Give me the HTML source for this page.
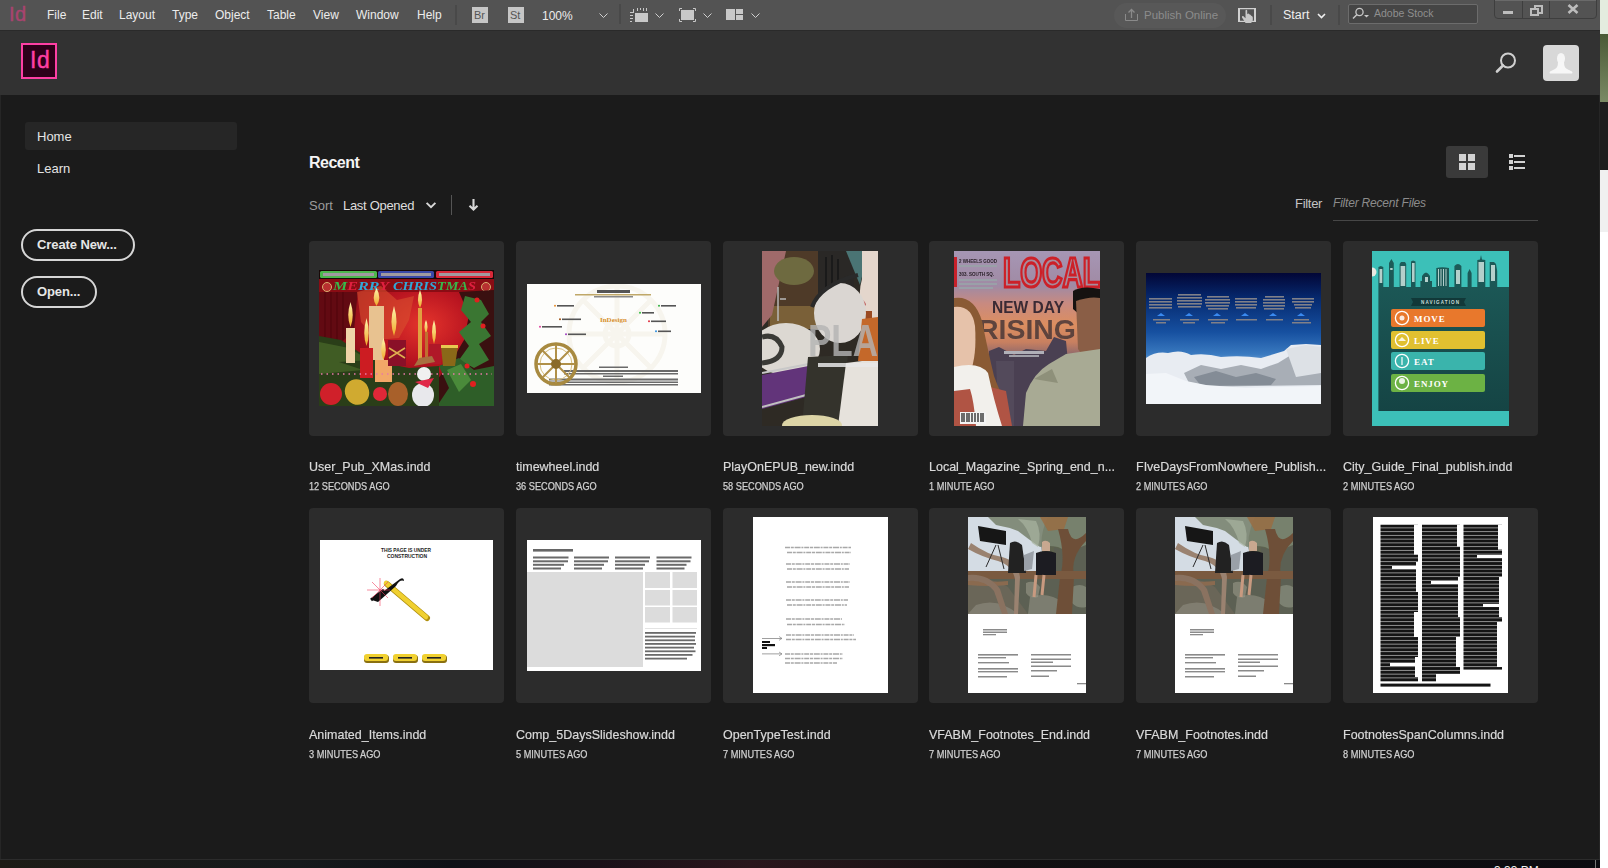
<!DOCTYPE html>
<html><head><meta charset="utf-8">
<style>
*{margin:0;padding:0;box-sizing:border-box}
html,body{width:1608px;height:868px;overflow:hidden;background:#fff;font-family:"Liberation Sans",sans-serif}
.a{position:absolute}
.t{position:absolute;white-space:nowrap;line-height:1}
#win{position:absolute;left:0;top:0;width:1600px;height:859px;background:#1b1b1b}
#menubar{position:absolute;left:0;top:0;width:1600px;height:30px;background:#535353}
.mi{position:absolute;top:9px;font-size:12px;color:#ececec;line-height:1;white-space:nowrap}
.sep{position:absolute;width:2px;background:#494949}
#header{position:absolute;left:0;top:30px;width:1600px;height:65px;background:#323232}
.card{position:absolute;width:195px;height:195px;background:#2c2c2c;border-radius:4px;overflow:hidden}
.th{position:absolute;overflow:hidden}
.ttl{position:absolute;font-size:13.5px;color:#dadada;-webkit-text-stroke:0.2px #dadada;white-space:nowrap;line-height:1;transform:scaleX(0.925);transform-origin:0 0}
.sub{position:absolute;font-size:10.5px;color:#d0d0d0;-webkit-text-stroke:0.25px #d0d0d0;white-space:nowrap;line-height:1;transform:scaleX(0.875);transform-origin:0 0}
.chev{position:absolute}
</style></head><body>
<!-- desktop strip -->
<div class="a" style="left:1600px;top:0;width:8px;height:34px;background:#e4ecdf"></div>
<div class="a" style="left:1600px;top:34px;width:8px;height:68px;background:linear-gradient(#4a5a36,#7a8a64)"></div>
<div class="a" style="left:1600px;top:102px;width:8px;height:68px;background:#1e1e1e"></div>
<div class="a" style="left:1600px;top:170px;width:8px;height:62px;background:#f0f0f0"></div>

<div id="win">
 <div class="a" style="left:0;top:30px;width:1px;height:830px;background:#262626"></div>
 <div class="a" style="left:1599px;top:30px;width:1px;height:830px;background:#262626"></div>
 <div id="menubar">
  <div class="t" style="left:9px;top:4px;font-size:20px;color:#a8446f;-webkit-text-stroke:0.4px #a8446f;letter-spacing:0.5px">Id</div>
  <div class="mi" style="left:47px">File</div>
  <div class="mi" style="left:82px">Edit</div>
  <div class="mi" style="left:119px">Layout</div>
  <div class="mi" style="left:172px">Type</div>
  <div class="mi" style="left:215px">Object</div>
  <div class="mi" style="left:267px">Table</div>
  <div class="mi" style="left:313px">View</div>
  <div class="mi" style="left:356px">Window</div>
  <div class="mi" style="left:417px">Help</div>
  <div class="sep" style="left:455px;top:5px;height:20px"></div>
  <div class="a" style="left:472px;top:7px;width:16px;height:16px;background:#c6c6c6"><div class="t" style="left:2px;top:3px;font-size:11px;color:#555">Br</div></div>
  <div class="a" style="left:508px;top:7px;width:16px;height:16px;background:#c6c6c6"><div class="t" style="left:2px;top:3px;font-size:11px;color:#555">St</div></div>
  <div class="mi" style="left:542px;top:10px">100%</div>
  <svg class="a" style="left:599px;top:13px" width="9" height="6"><path d="M0.5 0.5 L4.5 4.5 L8.5 0.5" stroke="#cfcfcf" fill="none" stroke-width="1"/></svg>
  <div class="sep" style="left:619px;top:4px;height:20px"></div>
  <!-- icon1 -->
  <div class="a" style="left:635px;top:13px;width:13px;height:9px;background:#c8c8c8"></div>
  <div class="a" style="left:630px;top:12px;width:4px;height:1px;background:#c8c8c8"></div>
  <div class="a" style="left:633px;top:9px;width:1px;height:3px;background:#c8c8c8"></div>
  <div class="a" style="left:637px;top:8px;width:1px;height:3px;background:#c8c8c8"></div>
  <div class="a" style="left:640px;top:8px;width:1px;height:2px;background:#c8c8c8"></div>
  <div class="a" style="left:643px;top:8px;width:1px;height:3px;background:#c8c8c8"></div>
  <div class="a" style="left:646px;top:8px;width:1px;height:3px;background:#c8c8c8"></div>
  <div class="a" style="left:630px;top:15px;width:3px;height:1px;background:#c8c8c8"></div>
  <div class="a" style="left:630px;top:18px;width:3px;height:1px;background:#c8c8c8"></div>
  <div class="a" style="left:630px;top:21px;width:2px;height:1px;background:#c8c8c8"></div>
  <svg class="a" style="left:655px;top:13px" width="9" height="6"><path d="M0.5 0.5 L4.5 4.5 L8.5 0.5" stroke="#cfcfcf" fill="none" stroke-width="1"/></svg>
  <!-- icon2 -->
  <svg class="a" style="left:679px;top:8px" width="17" height="14"><path d="M0.5 3V0.5H3M14 0.5H16.5V3M16.5 11V13.5H14M3 13.5H0.5V11" stroke="#c8c8c8" fill="none"/><rect x="2" y="2" width="13" height="10" fill="#c8c8c8"/></svg>
  <svg class="a" style="left:703px;top:13px" width="9" height="6"><path d="M0.5 0.5 L4.5 4.5 L8.5 0.5" stroke="#cfcfcf" fill="none" stroke-width="1"/></svg>
  <!-- icon3 -->
  <div class="a" style="left:726px;top:9px;width:9px;height:11px;background:#c8c8c8"></div>
  <div class="a" style="left:736px;top:9px;width:7px;height:5px;background:#c8c8c8"></div>
  <div class="a" style="left:736px;top:15px;width:7px;height:5px;background:#c8c8c8"></div>
  <svg class="a" style="left:751px;top:13px" width="9" height="6"><path d="M0.5 0.5 L4.5 4.5 L8.5 0.5" stroke="#cfcfcf" fill="none" stroke-width="1"/></svg>

  <!-- publish online -->
  <div class="a" style="left:1114px;top:3px;width:112px;height:25px;border-radius:13px;background:#585858"></div>
  <svg class="a" style="left:1125px;top:8px" width="13" height="13"><path d="M0.5 6V12.5H12.5V6" stroke="#8a8a8a" fill="none"/><path d="M6.5 10V1.5M3.5 4.5L6.5 1.5L9.5 4.5" stroke="#8a8a8a" fill="none" stroke-width="1.3"/></svg>
  <div class="mi" style="left:1144px;top:10px;font-size:11.5px;color:#8c8c8c">Publish Online</div>
  <!-- hand icon -->
  <svg class="a" style="left:1232px;top:3px" width="30" height="24"><path d="M7 5.6H23M7 18.4H23" stroke="#d0d0d0" stroke-width="1.3"/><path d="M7 5V19M23 5V19" stroke="#d0d0d0" stroke-width="2"/><path d="M13.6 20 L10 14.4 Q9.8 12.6 11.2 13.1 L13.5 15.3 V7.6 Q14.35 6.1 15.2 7.6 V11.2 Q16.4 9.6 17.6 11.4 Q18.6 11.4 19.2 12.8 Q20.5 12.8 20.8 14.6 V17.2 L19.2 20Z" fill="#c8c8c8"/></svg>
  <div class="sep" style="left:1270px;top:5px;height:20px"></div>
  <div class="mi" style="left:1283px;top:9px;font-size:12.5px;color:#efefef">Start</div>
  <svg class="a" style="left:1317px;top:13px" width="9" height="6"><path d="M1 1 L4.5 4.5 L8 1" stroke="#efefef" fill="none" stroke-width="1.6"/></svg>
  <div class="sep" style="left:1338px;top:5px;height:20px"></div>
  <!-- search box -->
  <div class="a" style="left:1348px;top:4px;width:130px;height:20px;border:1px solid #6c6c6c;border-radius:2px;background:#454545"></div>
  <svg class="a" style="left:1352px;top:7px" width="18" height="13"><circle cx="7.5" cy="5" r="3.6" stroke="#c8c8c8" fill="none" stroke-width="1.3"/><path d="M5 7.5L1 11.5" stroke="#c8c8c8" stroke-width="1.5"/><path d="M12 8H17L14.5 10.5Z" fill="#c8c8c8"/></svg>
  <div class="mi" style="left:1374px;top:8px;font-size:10.5px;color:#8f8f8f">Adobe Stock</div>
  <!-- window controls -->
  <div class="a" style="left:1494px;top:-2px;width:103px;height:21px;border:1px solid #3e3e3e;border-radius:0 0 4px 4px;background:#535353"></div>
  <div class="a" style="left:1522px;top:0;width:1px;height:18px;background:#3e3e3e"></div>
  <div class="a" style="left:1549px;top:0;width:1px;height:18px;background:#3e3e3e"></div>
  <div class="a" style="left:1495px;top:0;width:101px;height:1px;background:#6a6a6a"></div>
  <div class="a" style="left:1503px;top:11px;width:10px;height:3px;background:#bdbdbd"></div>
  <svg class="a" style="left:1529px;top:4px" width="15" height="12"><path d="M6 4V2H13V9H10" stroke="#bcbcbc" fill="none" stroke-width="2"/><rect x="2" y="5" width="7" height="6" stroke="#bcbcbc" fill="none" stroke-width="2"/></svg>
  <svg class="a" style="left:1567px;top:4px" width="12" height="10"><path d="M1.5 1L10.5 9M10.5 1L1.5 9" stroke="#bcbcbc" stroke-width="2.6"/></svg>
 </div>

 <div id="header">
  <div class="a" style="left:0;top:0;width:1600px;height:1px;background:#2a2a2a"></div>
  <div class="a" style="left:21px;top:13px;width:36px;height:36px;border:2px solid #ff3fa4;background:#2d0019"></div>
  <div class="t" style="left:30px;top:19px;font-size:23px;color:#ff3fa4;-webkit-text-stroke:0.4px #ff3fa4;letter-spacing:0.5px">Id</div>
  <svg class="a" style="left:1495px;top:52px;top:22px" width="22" height="22"><circle cx="13" cy="8.5" r="7" stroke="#d0d0d0" fill="none" stroke-width="2"/><path d="M8 13.5L2 19.5" stroke="#d0d0d0" stroke-width="2.6" stroke-linecap="round"/></svg>
  <div class="a" style="left:1543px;top:15px;width:36px;height:36px;border-radius:4px;background:#d8d8d8;overflow:hidden">
   <svg width="36" height="36"><ellipse cx="18" cy="13.5" rx="4" ry="5.5" fill="#f6f6f6"/><path d="M15 17 Q15 22.5 12 24 L7 26.5 Q6 28 7 28.5 L29 28.5 Q30 28 29 26.5 L24 24 Q21 22.5 21 17Z" fill="#f7f7f7"/></svg>
  </div>
 </div>

 <!-- sidebar -->
 <div class="a" style="left:25px;top:122px;width:212px;height:28px;border-radius:3px;background:#262626"></div>
 <div class="t" style="left:37px;top:130px;font-size:13px;color:#e4e4e4">Home</div>
 <div class="t" style="left:37px;top:162px;font-size:13px;color:#e4e4e4">Learn</div>
 <div class="a" style="left:21px;top:229px;width:114px;height:32px;border:2px solid #d6d6d6;border-radius:16px"></div>
 <div class="t" style="left:37px;top:238px;font-size:13px;font-weight:bold;color:#e6e6e6;letter-spacing:-0.1px">Create New...</div>
 <div class="a" style="left:21px;top:276px;width:76px;height:32px;border:2px solid #d6d6d6;border-radius:16px"></div>
 <div class="t" style="left:37px;top:285px;font-size:13px;font-weight:bold;color:#e6e6e6;letter-spacing:-0.1px">Open...</div>

 <!-- recent header -->
 <div class="t" style="left:309px;top:155px;font-size:16px;font-weight:bold;color:#f4f4f4;letter-spacing:-0.5px">Recent</div>
 <div class="t" style="left:309px;top:199px;font-size:13px;color:#9c9c9c">Sort</div>
 <div class="t" style="left:343px;top:199px;font-size:13px;color:#dedede;letter-spacing:-0.3px">Last Opened</div>
 <svg class="a" style="left:425px;top:201px" width="12" height="9"><path d="M1.6 1.8L6 6.2L10.4 1.8" stroke="#d8d8d8" fill="none" stroke-width="1.9"/></svg>
 <div class="a" style="left:451px;top:195px;width:1px;height:20px;background:#555"></div>
 <svg class="a" style="left:468px;top:198px" width="11" height="14"><path d="M5.5 1V11.5M1.5 7.8L5.5 11.6L9.5 7.8" stroke="#d8d8d8" fill="none" stroke-width="2.1"/></svg>

 <div class="a" style="left:1446px;top:146px;width:42px;height:32px;border-radius:3px;background:#3a3a3a"></div>
 <div class="a" style="left:1459px;top:154px;width:7px;height:7px;background:#d2d2d2"></div>
 <div class="a" style="left:1468px;top:154px;width:7px;height:7px;background:#d2d2d2"></div>
 <div class="a" style="left:1459px;top:163px;width:7px;height:7px;background:#d2d2d2"></div>
 <div class="a" style="left:1468px;top:163px;width:7px;height:7px;background:#d2d2d2"></div>
 <svg class="a" style="left:1509px;top:154px" width="16" height="16"><rect x="0" y="0" width="4" height="4" fill="#d2d2d2"/><rect x="0" y="6" width="4" height="4" fill="#d2d2d2"/><rect x="0" y="12" width="4" height="4" fill="#d2d2d2"/><rect x="5" y="1" width="11" height="2" fill="#d2d2d2"/><rect x="5" y="7" width="11" height="2" fill="#d2d2d2"/><rect x="5" y="13" width="11" height="2" fill="#d2d2d2"/></svg>

 <div class="t" style="left:1295px;top:197px;font-size:13px;color:#c4c4c4;letter-spacing:-0.3px">Filter</div>
 <div class="t" style="left:1333px;top:197px;font-size:12px;font-style:italic;color:#8c8c8c;letter-spacing:-0.2px">Filter Recent Files</div>
 <div class="a" style="left:1333px;top:220px;width:205px;height:1px;background:#474747"></div>

  <div class="card" style="left:309px;top:241px"></div>
 <div class="card" style="left:515.8px;top:241px"></div>
 <div class="card" style="left:722.6px;top:241px"></div>
 <div class="card" style="left:929.4px;top:241px"></div>
 <div class="card" style="left:1136.2px;top:241px"></div>
 <div class="card" style="left:1343px;top:241px"></div>
 <div class="card" style="left:309px;top:508px"></div>
 <div class="card" style="left:515.8px;top:508px"></div>
 <div class="card" style="left:722.6px;top:508px"></div>
 <div class="card" style="left:929.4px;top:508px"></div>
 <div class="card" style="left:1136.2px;top:508px"></div>
 <div class="card" style="left:1343px;top:508px"></div>

 <div class="ttl" style="left:309px;top:460px">User_Pub_XMas.indd</div>
 <div class="sub" style="left:309px;top:481px">12 SECONDS AGO</div>
 <div class="ttl" style="left:515.8px;top:460px">timewheel.indd</div>
 <div class="sub" style="left:515.8px;top:481px">36 SECONDS AGO</div>
 <div class="ttl" style="left:722.6px;top:460px">PlayOnEPUB_new.indd</div>
 <div class="sub" style="left:722.6px;top:481px">58 SECONDS AGO</div>
 <div class="ttl" style="left:929.4px;top:460px">Local_Magazine_Spring_end_n...</div>
 <div class="sub" style="left:929.4px;top:481px">1 MINUTE AGO</div>
 <div class="ttl" style="left:1136.2px;top:460px">FIveDaysFromNowhere_Publish...</div>
 <div class="sub" style="left:1136.2px;top:481px">2 MINUTES AGO</div>
 <div class="ttl" style="left:1343px;top:460px">City_Guide_Final_publish.indd</div>
 <div class="sub" style="left:1343px;top:481px">2 MINUTES AGO</div>

 <div class="ttl" style="left:309px;top:728px">Animated_Items.indd</div>
 <div class="sub" style="left:309px;top:749px">3 MINUTES AGO</div>
 <div class="ttl" style="left:515.8px;top:728px">Comp_5DaysSlideshow.indd</div>
 <div class="sub" style="left:515.8px;top:749px">5 MINUTES AGO</div>
 <div class="ttl" style="left:722.6px;top:728px">OpenTypeTest.indd</div>
 <div class="sub" style="left:722.6px;top:749px">7 MINUTES AGO</div>
 <div class="ttl" style="left:929.4px;top:728px">VFABM_Footnotes_End.indd</div>
 <div class="sub" style="left:929.4px;top:749px">7 MINUTES AGO</div>
 <div class="ttl" style="left:1136.2px;top:728px">VFABM_Footnotes.indd</div>
 <div class="sub" style="left:1136.2px;top:749px">7 MINUTES AGO</div>
 <div class="ttl" style="left:1343px;top:728px">FootnotesSpanColumns.indd</div>
 <div class="sub" style="left:1343px;top:749px">8 MINUTES AGO</div>

 <!-- 1 XMas -->
 <svg class="a" style="left:319px;top:270px;filter:blur(0.45px)" width="175" height="136" viewBox="0 0 175 136">
  <defs>
   <radialGradient id="xg" cx="0.6" cy="0.4" r="0.6"><stop offset="0" stop-color="#e4342c"/><stop offset="0.45" stop-color="#b81420"/><stop offset="1" stop-color="#6a0810"/></radialGradient>
   <linearGradient id="fl" x1="0" y1="0" x2="0" y2="1"><stop offset="0" stop-color="#fff6b0"/><stop offset="1" stop-color="#f0a828"/></linearGradient>
  </defs>
  <rect width="175" height="136" fill="url(#xg)"/>
  <path d="M0 9 H40 L35 60 L20 75 L0 80Z" fill="#620a12"/>
  <g stroke="#52060c" stroke-width="1.2"><path d="M6 20V80M12 20V78M18 20V74M24 22V70"/></g>
  <path d="M0 9 H175 V22 H0Z" fill="#8a0c14"/>
  <path d="M38 22 L62 16 L78 30 L95 26 L90 50 L80 68 L58 70 L42 52Z" fill="#d8502e" opacity="0.6"/>
  <rect x="0" y="0" width="175" height="9" fill="#180808"/>
  <rect x="1" y="1" width="57" height="7" rx="1.5" fill="#4cb84c"/><rect x="4" y="3" width="51" height="3" fill="#a09aa0"/>
  <rect x="59" y="1" width="56" height="7" rx="1.5" fill="#3a48a8"/><rect x="62" y="3" width="50" height="3" fill="#a09aa0"/>
  <rect x="117" y="1" width="57" height="7" rx="1.5" fill="#d82838"/><rect x="120" y="3" width="51" height="3" fill="#a09aa0"/>
  <text x="14" y="20" font-family="Liberation Serif" font-style="italic" font-weight="bold" font-size="11.5" fill="#38b84a" textLength="56" lengthAdjust="spacingAndGlyphs">M<tspan fill="#e02040">E</tspan><tspan fill="#30a8d8">RR</tspan><tspan fill="#e02040">Y</tspan></text>
  <text x="74" y="20" font-family="Liberation Serif" font-style="italic" font-weight="bold" font-size="11.5" fill="#30a8d8" textLength="83" lengthAdjust="spacingAndGlyphs">CHRIS<tspan fill="#38b84a">TMA</tspan><tspan fill="#e02040">S</tspan></text>
  <circle cx="8" cy="17" r="4.5" fill="#b83030" stroke="#d8b070" stroke-width="1"/><circle cx="167" cy="17" r="4.5" fill="#b83030" stroke="#d8b070" stroke-width="1"/>
  <!-- holly right -->
  <path d="M140 22 L175 20 V136 H110 L118 110 L132 92 L145 70 L150 45Z" fill="#3a1010"/>
  <path d="M146 26 L162 30 L170 44 L162 52 L172 66 L160 74 L170 90 L155 98 L140 90 L150 76 L140 62 L152 52 L142 40Z" fill="#3a7632"/>
  <path d="M120 96 L140 88 L155 100 L175 96 V136 H118 L130 118Z" fill="#2e5e28"/>
  <path d="M128 100 L142 94 L152 110 L140 122Z" fill="#4a8a3a"/>
  <circle cx="158" cy="30" r="2.5" fill="#e02020"/><circle cx="164" cy="56" r="2.5" fill="#e02020"/><circle cx="148" cy="96" r="2.5" fill="#e02020"/><circle cx="154" cy="114" r="3" fill="#e02020"/><circle cx="94" cy="112" r="2" fill="#e02020"/>
  <!-- greenery -->
  <path d="M0 66 L22 70 L40 82 L60 92 L90 98 L120 96 L120 136 H0Z" fill="#2a3e18"/>
  <path d="M0 72 L30 78 L50 90 L20 92 L44 100 L0 104Z" fill="#4a6a2a" opacity="0.7"/>
  <!-- candles -->
  <rect x="50" y="36" width="15" height="54" fill="#e8c290"/>
  <path d="M57.5 18 Q52 28 57.5 36 Q63 28 57.5 18Z" fill="url(#fl)"/>
  <rect x="27" y="58" width="9" height="35" fill="#efd4a8"/>
  <path d="M31.5 32 Q27 46 31.5 57 Q36 46 31.5 32Z" fill="url(#fl)"/>
  <rect x="41" y="78" width="13" height="30" fill="#cc1c22"/>
  <path d="M47.5 48 Q43 64 47.5 76 Q52 64 47.5 48Z" fill="url(#fl)"/>
  <rect x="56" y="90" width="17" height="22" fill="#f2a868"/>
  <path d="M64.5 68 Q60 80 64.5 90 Q69 80 64.5 68Z" fill="url(#fl)"/>
  <path d="M75 36 Q70 52 75 66 Q80 52 75 36Z" fill="url(#fl)"/>
  <rect x="69" y="70" width="18" height="26" fill="#8a1028"/>
  <path d="M70 78 L86 88 M86 78 L70 88" stroke="#e0b050" stroke-width="1.5"/>
  <rect x="99" y="38" width="4" height="52" fill="#e0a040"/>
  <path d="M101 20 Q97 30 101 38 Q105 30 101 20Z" fill="url(#fl)"/>
  <path d="M107 50 Q104 56 107 64 Q110 56 107 50Z" fill="url(#fl)"/>
  <rect x="106" y="62" width="3" height="28" fill="#c07030"/>
  <path d="M115 50 Q111 62 115 74 Q119 62 115 50Z" fill="url(#fl)"/>
  <rect x="110" y="74" width="12" height="20" fill="#b01828"/>
  <path d="M122 76 H139 L136 96 H124Z" fill="#8a6818"/><rect x="122" y="75" width="17" height="3" fill="#e8c850"/>
  <!-- dots row -->
  <path d="M2 104 H173" stroke="#e878a8" stroke-width="1.6" stroke-dasharray="1.5 4"/>
  <!-- ornaments -->
  <circle cx="12" cy="124" r="11" fill="#d0202a"/>
  <ellipse cx="38" cy="122" rx="12" ry="13" fill="#d0aa30" transform="rotate(-25 38 122)"/>
  <circle cx="61" cy="124" r="7" fill="#e02838"/>
  <ellipse cx="79" cy="124" rx="10" ry="12" fill="#a8602a"/>
  <ellipse cx="104" cy="125" rx="11" ry="12" fill="#e8e8ec"/>
  <circle cx="105" cy="104" r="7" fill="#f0f0f0"/>
  <path d="M95 96 L116 92 L113 86 L100 88Z" fill="#a87040"/>
  <path d="M96 112 L115 108 L109 118Z" fill="#e02848"/>
 </svg>

 <!-- 2 timewheel -->
 <svg class="a" style="left:527px;top:284px" width="174" height="109" viewBox="0 0 174 109">
  <rect width="174" height="109" fill="#fdfdfb"/>
  <g stroke="#f4f0e6" fill="none" stroke-width="5" opacity="0.6">
   <circle cx="90" cy="50" r="48"/><circle cx="90" cy="50" r="12"/>
   <path d="M90 2V98M42 50H138M56 16L124 84M124 16L56 84"/>
  </g>
  <rect x="70" y="6" width="33" height="3" fill="#555"/>
  <rect x="48" y="10" width="76" height="1.5" fill="#c0a868"/>
  <rect x="67" y="12" width="39" height="1.5" fill="#888"/>
  <text x="73" y="38" font-family="Liberation Serif" font-weight="bold" font-size="7" fill="#d8902c">InDesign</text>
  <g fill="#555">
   <rect x="30" y="21" width="17" height="1.6"/><rect x="35" y="34.5" width="19" height="1.6"/><rect x="15" y="42" width="20" height="1.6"/><rect x="41" y="49.5" width="18" height="1.6"/>
   <rect x="134" y="21" width="15" height="1.6"/><rect x="115" y="28" width="12" height="1.6"/><rect x="124" y="36.5" width="15" height="1.6"/><rect x="131" y="46.5" width="13" height="1.6"/>
  </g>
  <circle cx="28" cy="21.8" r="1" fill="#e89030"/><circle cx="33" cy="35.3" r="1" fill="#a05010"/><circle cx="13" cy="42.8" r="1" fill="#e040a0"/><circle cx="39" cy="50.3" r="1" fill="#a040c0"/>
  <circle cx="132" cy="21.8" r="1" fill="#30b040"/><circle cx="113" cy="28.8" r="1" fill="#30c040"/><circle cx="122" cy="37.3" r="1" fill="#e03040"/><circle cx="129" cy="47.3" r="1" fill="#3090e0"/>
  <g fill="#6a6a6a">
   <rect x="72" y="82.5" width="29" height="1.5"/><rect x="37" y="86" width="114" height="2"/><rect x="37" y="89" width="114" height="1.5"/>
   <rect x="76" y="91.5" width="20" height="1.5"/><rect x="22" y="94.5" width="129" height="2"/><rect x="22" y="97.5" width="129" height="1.5"/><rect x="22" y="100" width="129" height="1.5"/>
  </g>
  <circle cx="29" cy="80" r="20" fill="none" stroke="#a88a40" stroke-width="3.5"/>
  <circle cx="29" cy="80" r="16" fill="none" stroke="#d8c080" stroke-width="1"/>
  <g stroke="#b09048" stroke-width="2"><path d="M29 61V99M10 80H48M15.5 66.5L42.5 93.5M42.5 66.5L15.5 93.5"/></g>
  <circle cx="29" cy="80" r="5" fill="#8a6a28"/>
 </svg>

 <!-- 3 PlayOn -->
 <svg class="a" style="left:762px;top:251px;filter:blur(0.45px)" width="116" height="175" viewBox="0 0 116 175">
  <rect width="116" height="175" fill="#2e2a24"/>
  <rect x="6" y="0" width="52" height="78" fill="#4e3a28"/>
  <path d="M8 55 H58 V78 H8Z" fill="#7a6038"/>
  <path d="M56 0 H92 V40 L60 62 H56Z" fill="#2a2826"/>
  <path d="M64 6 V50 M70 4 V46 M76 8 V44" stroke="#1a1a1a" stroke-width="2"/>
  <path d="M0 0 H24 L10 64 L0 76Z" fill="#a06a6a"/>
  <ellipse cx="32" cy="20" rx="20" ry="14" fill="#6e6a40"/><path d="M16 36 V70 M18 48 H24" stroke="#b8b8b8" stroke-width="1.5"/>
  <path d="M84 0 H106 L98 34Z" fill="#4a7474"/>
  <path d="M100 0 H116 V68 L104 66 Q94 48 100 28Z" fill="#e4d6cc"/>
  <path d="M98 48 Q104 50 104 54 Q100 58 98 56Z" fill="#c06060"/><path d="M103 60 H110 V87 H103Z" fill="#9a4a22"/>
  <ellipse cx="78" cy="62" rx="26" ry="30" fill="#dad6d2"/>
  <path d="M50 56 Q58 34 96 24" stroke="#2a2a2a" stroke-width="4" fill="none"/>
  <ellipse cx="24" cy="98" rx="34" ry="26" fill="#dcd8d2"/>
  <path d="M0 86 Q14 82 20 96 Q20 110 0 112" stroke="#3a3a36" stroke-width="5" fill="none"/>
  <path d="M0 124 L62 112 L66 140 L0 158Z" fill="#62347a"/>
  <path d="M0 122 L62 110" stroke="#c8c8c8" stroke-width="2"/>
  <path d="M0 156 L66 138" stroke="#c0c0c0" stroke-width="2"/>
  <path d="M46 106 L86 104 L78 175 L40 175Z" fill="#34332c"/>
  <path d="M84 112 L116 108 V175 H76Z" fill="#e6e2dc"/>
  <path d="M100 68 L116 66 V110 L96 110Z" fill="#c4682a"/>
  <ellipse cx="50" cy="174" rx="30" ry="10" fill="#dcd4a6"/>
  <text x="46" y="105" font-family="Liberation Sans" font-weight="bold" font-size="44" fill="#b4b4b4" opacity="0.8" textLength="70" lengthAdjust="spacingAndGlyphs">PLA</text>
  <rect x="56" y="112" width="60" height="4" fill="#e8e8e8" opacity="0.85"/>
 </svg>

 <!-- 4 Local -->
 <svg class="a" style="left:954px;top:251px;filter:blur(0.45px)" width="146" height="175" viewBox="0 0 146 175">
  <defs><linearGradient id="lsky" x1="0" y1="0" x2="0" y2="1">
   <stop offset="0" stop-color="#a696b4"/><stop offset="0.2" stop-color="#a08aa4"/><stop offset="0.3" stop-color="#c88a80"/><stop offset="0.42" stop-color="#dc8e60"/><stop offset="0.52" stop-color="#c88060"/><stop offset="0.62" stop-color="#7a6070"/><stop offset="1" stop-color="#4a3e4c"/></linearGradient></defs>
  <rect width="146" height="175" fill="url(#lsky)"/>
  <text x="49" y="36" font-family="Liberation Sans" font-weight="bold" font-size="42" fill="#a88c9c" stroke="#cc2028" stroke-width="3.2" textLength="97" lengthAdjust="spacingAndGlyphs">LOCAL</text>
  <rect x="0" y="6" width="3" height="30" fill="#c8202a"/>
  <text x="5" y="12" font-family="Liberation Sans" font-weight="bold" font-size="5.5" fill="#2a2028" textLength="38" lengthAdjust="spacingAndGlyphs">2 WHEELS GOOD</text>
  <rect x="5" y="14" width="38" height="2" fill="#9aa0a8"/>
  <text x="5" y="25" font-family="Liberation Sans" font-weight="bold" font-size="5" fill="#2a2028" textLength="35" lengthAdjust="spacingAndGlyphs">303. SOUTH SQ.</text>
  <rect x="5" y="28" width="38" height="2" fill="#9aa0a8"/><rect x="5" y="32" width="38" height="2" fill="#9aa0a8"/><rect x="5" y="36" width="34" height="2" fill="#9aa0a8"/>
  <text x="38" y="62" font-family="Liberation Sans" font-weight="bold" font-size="17" fill="#3a2a34" textLength="72" lengthAdjust="spacingAndGlyphs">NEW DAY</text>
  <text x="24" y="88" font-family="Liberation Sans" font-weight="bold" font-size="28" fill="#4a3838" opacity="0.85" textLength="98" lengthAdjust="spacingAndGlyphs">RISING</text>
  <path d="M35 175 V100 L45 96 L60 104 L72 98 L92 100 L100 86 L112 90 L120 175Z" fill="#4a4052"/><path d="M42 110 H60 V175 H45Z" fill="#5a5262" opacity="0.6"/>
  <rect x="50" y="100" width="40" height="3" fill="#b0b0b8"/><rect x="55" y="104" width="30" height="2" fill="#a0a0a8"/>
  <!-- woman -->
  <path d="M0 47 Q20 44 28 70 Q34 100 40 125 Q46 142 52 150 L30 152 L18 126 L0 126Z" fill="#8a5a34"/>
  <path d="M0 56 Q18 54 21 75 Q23 105 16 122 L0 124Z" fill="#e6c2aa"/>
  <path d="M0 140 L20 136 L22 175 H0Z" fill="#b05444"/>
  <path d="M36 136 L52 140 L58 175 H42Z" fill="#b05444"/>
  <path d="M0 116 Q25 110 34 122 Q40 150 48 175 H22 Q20 150 16 138 L0 140Z" fill="#f2f0ec"/>
  <!-- man -->
  <path d="M119 40 Q128 34 146 38 V60 L126 64 L119 58Z" fill="#161210"/>
  <path d="M122 50 Q136 45 146 47 V110 Q132 112 124 98Z" fill="#8a5e46"/>
  <path d="M69 175 L72 142 Q80 122 95 113 L112 103 L146 98 V175Z" fill="#a8aa94"/>
  <path d="M80 128 L98 118 L104 132Z" fill="#8e907a"/>
  <rect x="6" y="161" width="26" height="12" fill="#f4f4f4"/>
  <path d="M8 162V171M10 162V171M13 162V171M15 162V171M18 162V171M21 162V171M24 162V171M27 162V171M29 162V171" stroke="#111" stroke-width="1.2"/>
 </svg>

 <!-- 5 FiveDays -->
 <svg class="a" style="left:1146px;top:273px" width="175" height="131" viewBox="0 0 175 131">
  <defs><linearGradient id="fsky" x1="0" y1="0" x2="0" y2="1">
   <stop offset="0" stop-color="#020636"/><stop offset="0.2" stop-color="#062a70"/><stop offset="0.45" stop-color="#1650a0"/><stop offset="0.62" stop-color="#3a7ac0"/><stop offset="0.7" stop-color="#7aa8d8"/><stop offset="1" stop-color="#7aa8d8"/></linearGradient></defs>
  <rect width="175" height="131" fill="url(#fsky)"/>
  <g fill="#808088">
   <rect x="3" y="25" width="23" height="1.6"/><rect x="3" y="28" width="23" height="1.6"/><rect x="3" y="31" width="23" height="1.6"/><rect x="3" y="34" width="23" height="1.6"/>
   <rect x="32" y="21" width="23" height="1.6"/><rect x="31" y="24" width="25" height="1.6"/><rect x="31" y="27" width="25" height="1.6"/><rect x="31" y="30" width="25" height="1.6"/><rect x="32" y="33" width="23" height="1.6"/>
   <rect x="61" y="23" width="22" height="1.6"/><rect x="59" y="26" width="25" height="1.6"/><rect x="59" y="29" width="25" height="1.6"/><rect x="60" y="32" width="23" height="1.6"/><rect x="62" y="35" width="20" height="1.6"/>
   <rect x="89" y="25" width="22" height="1.6"/><rect x="89" y="28" width="22" height="1.6"/><rect x="89" y="31" width="22" height="1.6"/><rect x="90" y="34" width="20" height="1.6"/>
   <rect x="119" y="23" width="19" height="1.6"/><rect x="117" y="26" width="22" height="1.6"/><rect x="117" y="29" width="22" height="1.6"/><rect x="117" y="32" width="22" height="1.6"/><rect x="118" y="35" width="20" height="1.6"/>
   <rect x="146" y="25" width="22" height="1.6"/><rect x="146" y="28" width="22" height="1.6"/><rect x="148" y="31" width="18" height="1.6"/><rect x="149" y="34" width="16" height="1.6"/>
   <rect x="7" y="46" width="17" height="1.5"/><rect x="10" y="49" width="10" height="1.5"/>
   <rect x="34" y="46" width="19" height="1.5"/><rect x="37" y="49" width="12" height="1.5"/>
   <rect x="62" y="46" width="20" height="1.5"/><rect x="65" y="49" width="14" height="1.5"/>
   <rect x="90" y="46" width="21" height="1.5"/>
   <rect x="120" y="46" width="17" height="1.5"/>
   <rect x="148" y="46" width="15" height="1.5"/><rect x="146" y="49" width="19" height="1.5"/>
  </g>
  <g fill="#3a8af0"><path d="M11 43L15 40L19 43Z"/><path d="M39 43L43 40L47 43Z"/><path d="M67 43L71 40L75 43Z"/><path d="M95 43L99 40L103 43Z"/><path d="M123 43L127 40L131 43Z"/><path d="M151 43L155 40L159 43Z"/></g>
  <path d="M0 85 Q10 78 22 80 Q35 76 45 82 Q60 80 75 84 Q95 82 115 85 L138 78 L145 72 L160 71 L175 72 V131 H0Z" fill="#e8ecf2"/>
  <path d="M38 100 L55 92 L75 96 L95 92 L115 96 L132 90 L145 82 L160 85 L175 80 V112 L45 114Z" fill="#a8aeb6"/><path d="M48 104 L70 98 L90 104 L110 100 L130 106 L125 112 L55 113Z" fill="#848c96"/>
  <path d="M140 76 L160 72 L175 74 V100 L150 104Z" fill="#dde1e6"/>
  <path d="M0 101 L20 100 L40 108 L60 112 L100 115 L175 113 V131 H0Z" fill="#f2f5f9"/>
 </svg>

 <!-- 6 CityGuide -->
 <svg class="a" style="left:1372px;top:251px" width="137" height="175" viewBox="0 0 137 175">
  <defs><linearGradient id="cgp" x1="0" y1="0" x2="0" y2="1"><stop offset="0" stop-color="#1d5c5a"/><stop offset="1" stop-color="#154444"/></linearGradient></defs><rect width="137" height="175" fill="#3cc0b8"/>
  <path d="M6.4 160 V36 H6.4 V16 L8.8 15 L11.3 16 V36 H17 V12 L19.4 8 L21.8 12 V36 H27.6 V13 L29 11 H33 L34.2 13 V36 H39 V10.5 L41 9.5 L43.5 10.5 V36 H48.4 V30 L50 30 V25 Q54 18 58 25 V30 H60 V36 H64.3 V17 Q70 15.5 77 17 V36 H82.4 V15 Q86 11 89.4 15 V36 H95.6 V22 L97.6 18 L99.6 22 V36 H105.3 V9 L108 8.5 L109 4 L110 8.5 L113.3 9 V36 H117.7 V11 H122 L124 13 L125.2 20 V36 H137 V160Z" fill="url(#cgp)"/>
  <g fill="#cfe4e0" opacity="0.85">
   <rect x="7.5" y="18" width="2.8" height="14"/><rect x="18.2" y="17" width="2.4" height="2"/><rect x="28.6" y="15" width="4.6" height="20"/><rect x="40" y="12" width="2.6" height="19"/>
   <rect x="53" y="26" width="3" height="5"/><rect x="66" y="18" width="1" height="17"/><rect x="68.5" y="18" width="1" height="17"/><rect x="71" y="18" width="1" height="17"/><rect x="73.5" y="18" width="1" height="17"/>
   <rect x="84" y="19" width="4" height="14"/><rect x="106.5" y="11" width="5.5" height="20"/><rect x="119" y="14" width="4" height="16"/>
  </g>
  <circle cx="0" cy="21" r="4.5" fill="#ece8e0"/>
  <path d="M39 47 H94 L92 51 L94 55 H39 L41 51Z" fill="#113838"/>
  <text x="49" y="53.3" font-family="Liberation Sans" font-weight="bold" font-size="4.6" fill="#c8dcd8" textLength="38" lengthAdjust="spacing">NAVIGATION</text>
  <rect x="19" y="58" width="94" height="18" rx="2" fill="#e8782c"/>
  <rect x="19" y="80" width="94" height="18" rx="2" fill="#e0c030"/>
  <rect x="19" y="101" width="94" height="18" rx="2" fill="#3ab4ac"/>
  <rect x="19" y="123" width="94" height="18" rx="2" fill="#6cb244"/>
  <g fill="none" stroke="#fff" stroke-width="1.3"><circle cx="30" cy="67" r="6.6"/><circle cx="30" cy="89" r="6.6"/><circle cx="30" cy="110" r="6.6"/><circle cx="30" cy="132" r="6.6"/></g><g fill="#fff" opacity="0.85"><circle cx="30" cy="67" r="2.5"/><path d="M26 90 L30 86 L34 90Z"/><rect x="29.3" y="106" width="1.4" height="8"/><circle cx="30" cy="130" r="3"/></g>
  <g font-family="Liberation Serif" font-weight="bold" font-size="9" fill="#fff">
   <text x="42" y="71" letter-spacing="0.9">MOVE</text><text x="42" y="93" letter-spacing="0.9">LIVE</text><text x="42" y="114" letter-spacing="0.9">EAT</text><text x="42" y="136" letter-spacing="0.9">ENJOY</text></g>
 </svg>

 <!-- 7 Animated -->
 <svg class="a" style="left:320px;top:540px" width="173" height="130" viewBox="0 0 173 130">
  <rect width="173" height="130" fill="#fff"/>
  <text x="86" y="11.5" text-anchor="middle" font-family="Liberation Sans" font-weight="bold" font-size="5.2" fill="#222" textLength="50" lengthAdjust="spacingAndGlyphs">THIS PAGE IS UNDER</text>
  <text x="87" y="18" text-anchor="middle" font-family="Liberation Sans" font-weight="bold" font-size="5.2" fill="#222" textLength="40" lengthAdjust="spacingAndGlyphs">CONSTRUCTION</text>
  <path d="M67 44 L107 78" stroke="#b09010" stroke-width="6" stroke-linecap="round"/>
  <path d="M66 43 L106 77" stroke="#f0d030" stroke-width="4.5" stroke-linecap="round"/>
  <path d="M52 60 L72 45 L80 39 Q84 37 84 41 Q80 39 76 46 L58 62Z" fill="#111"/>
  <path d="M51 60 L64 50" stroke="#111" stroke-width="3"/>
  <g stroke="#f04060" stroke-width="0.6"><path d="M47 50H70M60 38V66M52 42L68 58M68 42L52 58"/></g>
  <g><rect x="44" y="115" width="25" height="8" rx="3" fill="#8a7010"/><rect x="44" y="114" width="24" height="7" rx="3" fill="#f0d030"/>
   <rect x="73" y="115" width="25" height="8" rx="3" fill="#8a7010"/><rect x="73" y="114" width="24" height="7" rx="3" fill="#f0d030"/>
   <rect x="102" y="115" width="25" height="8" rx="3" fill="#8a7010"/><rect x="102" y="114" width="24" height="7" rx="3" fill="#f0d030"/></g>
  <g fill="#222"><rect x="49" y="117" width="14" height="1.6"/><rect x="78" y="117" width="14" height="1.6"/><rect x="107" y="117" width="14" height="1.6"/></g>
 </svg>

 <!-- 8 Comp5Days -->
 <svg class="a" style="left:527px;top:540px" width="174" height="131" viewBox="0 0 174 131">
  <rect width="174" height="131" fill="#fff"/>
  <rect x="6" y="9" width="40" height="2.6" fill="#666"/>
  <g fill="#6a6a6a">
   <rect x="6" y="16.5" width="35.5" height="2"/><rect x="6" y="20.3" width="35" height="2"/><rect x="6" y="23.8" width="31" height="2"/><rect x="6" y="27.5" width="28" height="2"/>
   <rect x="47" y="16.5" width="35" height="2"/><rect x="47" y="20.3" width="34" height="2"/><rect x="47" y="23.8" width="30" height="2"/><rect x="47" y="27.5" width="28" height="2"/>
   <rect x="88" y="16.5" width="35" height="2"/><rect x="88" y="20.3" width="34" height="2"/><rect x="88" y="23.8" width="30" height="2"/><rect x="88" y="27.5" width="28" height="2"/>
   <rect x="129.5" y="16.5" width="35" height="2"/><rect x="129.5" y="20.3" width="34" height="2"/><rect x="129.5" y="23.8" width="30" height="2"/><rect x="129.5" y="27.5" width="28" height="2"/>
  </g>
  <rect x="0" y="32" width="116" height="95" fill="#dcdcdc"/>
  <g fill="#dcdcdc"><rect x="118" y="32" width="25" height="16"/><rect x="145.5" y="32" width="24.5" height="16"/><rect x="118" y="50" width="25" height="15.5"/><rect x="145.5" y="50" width="24.5" height="15.5"/><rect x="118" y="67" width="25" height="15.5"/><rect x="145.5" y="67" width="24.5" height="15.5"/></g>
  <rect x="118" y="88" width="52" height="0.8" fill="#ddd"/>
  <g fill="#6a6a6a"><rect x="118" y="92" width="51" height="1.8"/><rect x="118" y="95.7" width="50" height="1.8"/><rect x="118" y="99.4" width="50" height="1.8"/><rect x="118" y="103" width="51" height="1.8"/><rect x="118" y="106.7" width="49" height="1.8"/><rect x="118" y="110.4" width="50.5" height="1.8"/><rect x="118" y="114" width="47.5" height="1.8"/><rect x="118" y="117.7" width="42" height="1.8"/></g>
 </svg>

 <!-- 9 OpenType -->
 <svg class="a" style="left:753px;top:517px" width="135" height="176" viewBox="0 0 135 176">
  <rect width="135" height="176" fill="#fff"/>
  <g stroke="#a8a8a8" stroke-width="1.5" stroke-dasharray="5 0.8 3 0.8 6 0.8 2 0.8">
   <path d="M32 30.5H98M34 35.5H98"/>
   <path d="M33 47H97M34 52H96"/>
   <path d="M33 65H97M34 70H96"/>
   <path d="M33 83H95M34 88H94"/>
   <path d="M33 102H89M34 107.5H92"/>
   <path d="M33 118H101M33 122.5H103"/>
   <path d="M32 137H90M32 141.5H90M32 146H84"/>
  </g>
  <rect x="9" y="121" width="20" height="0.8" fill="#888"/><rect x="9" y="136.5" width="20" height="0.8" fill="#888"/>
  <path d="M26 119.5L29 121.4L26 123.3M26 135L29 136.9L26 138.8" stroke="#888" stroke-width="0.7" fill="none"/>
  <rect x="9" y="124" width="8" height="2" fill="#111"/><rect x="9" y="127" width="13" height="2.2" fill="#111"/><rect x="9" y="130" width="5" height="2" fill="#111"/>
 </svg>

 <svg width="0" height="0" style="position:absolute"><defs><filter id="tblur" x="0" y="0" width="1" height="1"><feGaussianBlur stdDeviation="0.5"/></filter></defs></svg>
 <!-- 10 VFABM_End -->
 <svg class="a" style="left:968px;top:517px" width="118" height="176" viewBox="0 0 118 176">
  <rect width="118" height="176" fill="#fff"/>
  <g id="tree" filter="url(#tblur)">
  <rect width="118" height="97" fill="#5e6450"/>
  <path d="M0 0 H80 Q70 20 75 40 L70 56 H0Z" fill="#d4dce4"/>
  <path d="M20 0 H118 V30 Q100 36 90 30 Q80 28 72 30 Q60 22 50 14 Q40 10 28 8Z" fill="#7a8470" opacity="0.9"/>
  <path d="M50 2 Q60 10 64 26 L70 30 Q74 16 68 4Z" fill="#a8b4a0" opacity="0.7"/>
  <path d="M72 0 H100 L96 12 L80 14Z" fill="#9a6a40" opacity="0.8"/>
  <path d="M86 30 Q100 36 118 28 V97 H0 V60 Q40 50 86 56Z" fill="#5c6052"/>
  <path d="M0 64 Q20 58 40 70 L60 97 H0Z" fill="#6a6658"/>
  <path d="M8 88 Q30 80 50 97 H0Z" fill="#8a887a" opacity="0.7"/>
  <path d="M62 80 Q80 74 96 86 L90 97 H60Z" fill="#8a8a7c" opacity="0.7"/><path d="M104 70 Q112 66 118 70 V90 Q110 92 104 86Z" fill="#8a9080" opacity="0.7"/><path d="M58 66 Q66 62 72 70 L70 80 Q62 82 58 76Z" fill="#9a9a8a" opacity="0.6"/>
  <path d="M90 12 Q98 40 92 60 L88 97 H104 L106 60 Q102 40 118 24 V16 Q104 30 100 12Z" fill="#6e5038"/>
  <path d="M0 54 H118 V62 H0Z" fill="#7a5a40"/>
  <path d="M0 62 Q20 66 40 64 L40 68 Q20 70 0 68Z" fill="#8a6a50"/>
  <path d="M3 26 Q20 38 34 40 Q50 44 52 60 L50 97 L46 97 L47 62 Q44 48 30 44 Q14 40 0 32Z" fill="#9a8270"/>
  <path d="M0 58 Q20 56 32 72 L40 97 H34 L26 74 Q16 62 0 64Z" fill="#8a7260"/>
  <path d="M10 9 L38 14 L38 28 L12 24Z" fill="#161616"/>
  <path d="M28 28 L18 50 M30 28 L36 52" stroke="#2a2a2a" stroke-width="1"/>
  <path d="M42 26 Q48 22 54 28 L58 56 L40 56Z" fill="#202022"/>
  <path d="M56 38 L66 34 L64 52 L56 54Z" fill="#9aa0a8"/>
  <path d="M74 25 Q78 22 82 26 L82 34 L74 34Z" fill="#c8a890"/>
  <path d="M68 36 Q78 32 88 36 L88 58 L68 58Z" fill="#1e1e20"/>
  <path d="M68 58 L66 80 M76 58 L74 78" stroke="#c89a80" stroke-width="3"/>
  </g>
  <g fill="#8a8a8a">
   <rect x="15" y="112" width="24" height="1.5"/><rect x="15" y="114.5" width="24" height="1.5"/><rect x="15" y="117" width="13" height="1.3"/>
   <rect x="10" y="137" width="40" height="1.6"/><rect x="10" y="140" width="28" height="1.4"/><rect x="10" y="145" width="31" height="1.4"/><rect x="10" y="151" width="40" height="1.6"/><rect x="10" y="154" width="40" height="1.4"/><rect x="10" y="159" width="29" height="1.5"/>
   <rect x="63" y="137" width="40" height="1.5"/><rect x="63" y="141.5" width="40" height="1.5"/><rect x="63" y="144.5" width="22" height="1.5"/><rect x="63" y="148.5" width="40" height="1.5"/><rect x="63" y="153" width="26" height="1.5"/><rect x="63" y="158.5" width="18" height="1.5"/>
   <rect x="109" y="166" width="9" height="1.3"/>
  </g>
 </svg>

 <!-- 11 VFABM -->
 <svg class="a" style="left:1175px;top:517px" width="118" height="176" viewBox="0 0 118 176">
  <rect width="118" height="176" fill="#fff"/>
  <use href="#tree"/>
  <g fill="#8a8a8a">
   <rect x="15" y="112" width="24" height="1.5"/><rect x="15" y="114.5" width="24" height="1.5"/><rect x="15" y="117" width="13" height="1.3"/>
   <rect x="10" y="137" width="40" height="1.6"/><rect x="10" y="140" width="28" height="1.4"/><rect x="10" y="145" width="31" height="1.4"/><rect x="10" y="151" width="40" height="1.6"/><rect x="10" y="154" width="40" height="1.4"/><rect x="10" y="159" width="29" height="1.5"/>
   <rect x="63" y="137" width="40" height="1.5"/><rect x="63" y="141.5" width="40" height="1.5"/><rect x="63" y="144.5" width="22" height="1.5"/><rect x="63" y="148.5" width="40" height="1.5"/><rect x="63" y="153" width="26" height="1.5"/><rect x="63" y="158.5" width="18" height="1.5"/>
   <rect x="109" y="166" width="9" height="1.3"/>
  </g>
 </svg>

 <!-- 12 Footnotes -->
 <svg class="a" style="left:1373px;top:517px" width="135" height="176" viewBox="0 0 135 176">
  <defs><pattern id="fnl" width="10" height="3.75" patternUnits="userSpaceOnUse" y="7.6"><rect width="10" height="3" fill="#141414"/><rect y="3" width="10" height="0.75" fill="#8a8a8a"/></pattern></defs>
  <rect width="135" height="176" fill="#fff"/>
  <rect x="7.5" y="7.6" width="37.5" height="157" fill="url(#fnl)"/>
  <rect x="49" y="7.6" width="38" height="157" fill="url(#fnl)"/>
  <rect x="90.5" y="7.6" width="38.5" height="145" fill="url(#fnl)"/>
  <g fill="#fff">
   <rect x="41" y="7.6" width="4" height="30"/><rect x="43" y="45" width="2" height="30"/><rect x="41" y="95" width="4" height="25"/><rect x="42" y="140" width="3" height="20"/>
   <rect x="84" y="7.6" width="3" height="22"/><rect x="85" y="60" width="2" height="40"/><rect x="83" y="120" width="4" height="30"/>
   <rect x="125" y="7.6" width="4" height="25"/><rect x="126" y="60" width="3" height="40"/><rect x="124" y="105" width="5" height="45"/>
   <rect x="19" y="49" width="26" height="3"/><rect x="17" y="146" width="28" height="3"/>
   <rect x="58" y="64" width="29" height="3"/><rect x="63" y="157" width="24" height="8"/><rect x="73" y="161" width="14" height="4"/>
   <rect x="104" y="38" width="25" height="3"/><rect x="110" y="87" width="19" height="3"/>
  </g>
  <rect x="7.5" y="166.6" width="110" height="3" fill="#141414"/>
 </svg>

</div>
<!-- taskbar -->
<div class="a" style="left:0;top:859px;width:1600px;height:1px;background:#2c2c2c"></div>
<div class="a" style="left:0;top:860px;width:1600px;height:8px;background:linear-gradient(90deg,#1d1c16 0,#151a1c 300px,#0e1016 450px,#1a1018 600px,#2a161c 750px,#221418 850px,#121012 1000px,#0b0b10 1600px)"></div>
<div class="a" style="left:1595px;top:860px;width:1px;height:8px;background:#777"></div>
<div class="a" style="left:1494px;top:864px;height:4px;width:45px;overflow:hidden"><div class="t" style="left:0;top:1px;font-size:12px;color:#f0f0f0">3:33 PM</div></div>
</body></html>
